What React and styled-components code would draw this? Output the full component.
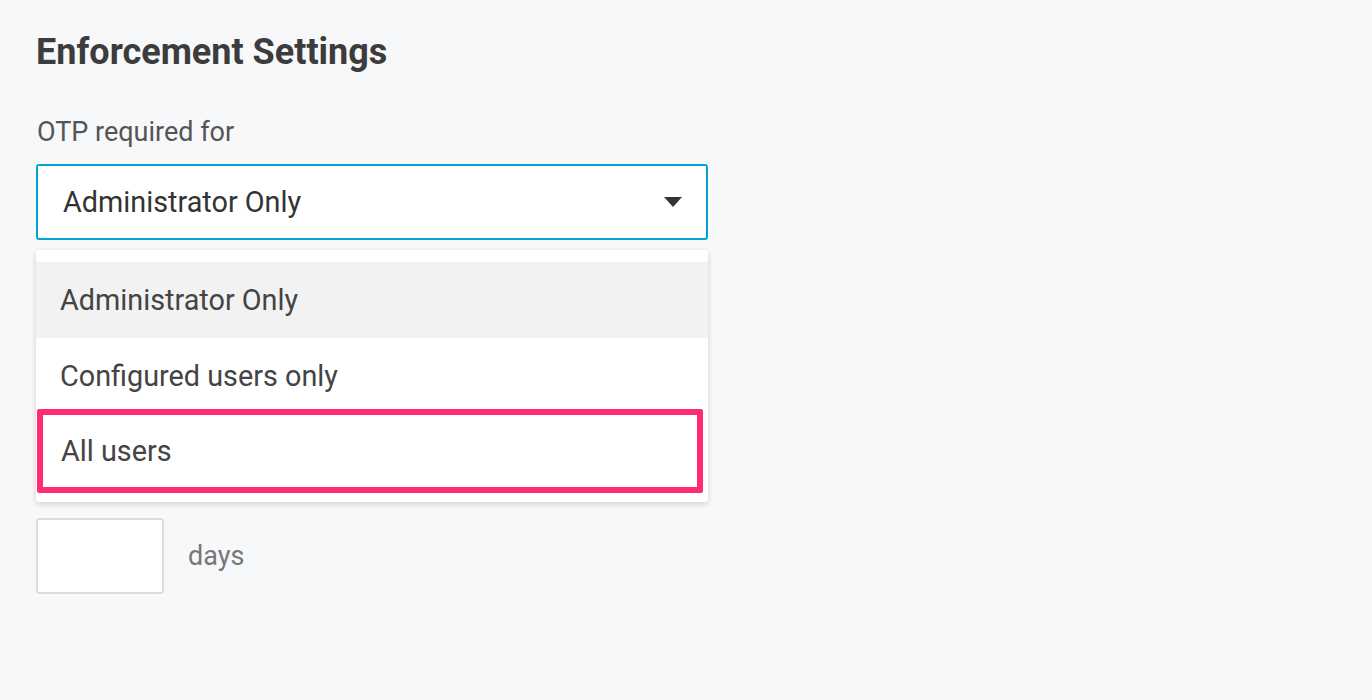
import React, { useState } from "react";
import styled, { createGlobalStyle } from "styled-components";

const GlobalStyle = createGlobalStyle`
  html, body {
    margin: 0;
    padding: 0;
    background: #f7f8fa;
    font-family: Roboto, "Liberation Sans", sans-serif;
  }
`;

const options = ["Administrator Only", "Configured users only", "All users"];

const App = () => {
  const [selected] = useState(0);
  const highlighted = 2;

  return (
    <>
      <GlobalStyle />
      <PageStyle>
        <TitleStyle>Enforcement Settings</TitleStyle>

        <FieldStyle>
          <LabelStyle>OTP required for</LabelStyle>
          <SelectWrap>
            <SelectBox>
              <span>{options[selected]}</span>
              <svg width="18" height="10" viewBox="0 0 18 10">
                <path d="M0 0 H18 L9 10 Z" fill="#333" />
              </svg>
            </SelectBox>

            <MenuStyle>
              {options.map((opt, i) => (
                <MenuItem key={opt} active={i === selected} marked={i === highlighted}>
                  {opt}
                </MenuItem>
              ))}
            </MenuStyle>
          </SelectWrap>
        </FieldStyle>

        <DaysRow>
          <DaysInput type="text" />
          <DaysText>days</DaysText>
        </DaysRow>
      </PageStyle>
    </>
  );
};

const PageStyle = styled.main`
  min-height: 700px;
  box-sizing: border-box;
  padding: 36px 36px;
`;

const TitleStyle = styled.h1`
  margin: 0;
  font-size: 36px;
  font-weight: 700;
  color: #3c3c3c;
  line-height: 32px;
`;

const FieldStyle = styled.div`
  display: flex;
  flex-direction: column;
  margin-top: 50px;
`;

const LabelStyle = styled.label`
  font-size: 27px;
  color: #555;
  line-height: 28px;
  padding-left: 1px;
`;

const SelectWrap = styled.div`
  position: relative;
  width: 672px;
  margin-top: 18px;
`;

const SelectBox = styled.div`
  height: 76px;
  box-sizing: border-box;
  border: 2px solid #04a5d6;
  border-radius: 3px;
  background: #fff;
  display: flex;
  align-items: center;
  justify-content: space-between;
  padding: 0 24px 0 25px;
  font-size: 28.8px;
  color: #333;
`;

const MenuStyle = styled.ul`
  position: absolute;
  top: 86px;
  left: 0;
  right: 0;
  margin: 0;
  padding: 12px 0;
  list-style: none;
  background: #fff;
  border-radius: 3px;
  box-shadow: 0 2px 6px rgba(0, 0, 0, 0.16);
  z-index: 2;
`;

const MenuItem = styled.li`
  height: 76px;
  box-sizing: border-box;
  display: flex;
  align-items: center;
  padding-left: 24px;
  font-size: 28.8px;
  color: #444;
  background: ${(p) => (p.active ? "#f2f2f2" : "#fff")};
  ${(p) =>
    p.marked &&
    `
    margin: -5px 5px -3px 1px;
    height: 84px;
    padding-left: 18px;
    border: 6px solid #ff2d6f;
    border-radius: 2px;
  `}
`;

const DaysRow = styled.div`
  display: flex;
  align-items: center;
  gap: 24px;
  margin-top: 278px;
`;

const DaysInput = styled.input`
  width: 128px;
  height: 76px;
  box-sizing: border-box;
  border: 2px solid #dcdcdc;
  border-radius: 3px;
  background: #fff;
  outline: none;
`;

const DaysText = styled.span`
  font-size: 27px;
  color: #777;
`;

export default App;
